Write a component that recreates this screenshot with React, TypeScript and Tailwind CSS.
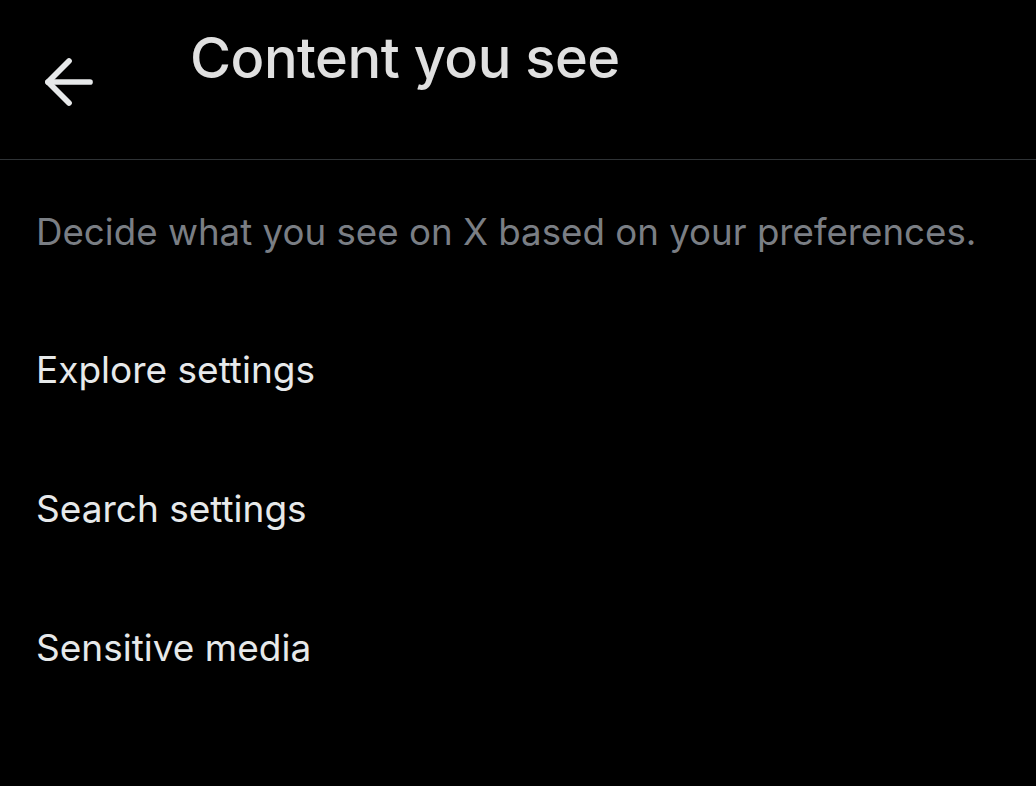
import { ArrowLeft } from "lucide-react";

const items = ["Explore settings", "Search settings", "Sensitive media"];

export default function App() {
  return (
    <div
      className="h-[786px] w-[1036px] overflow-hidden bg-black text-[#e7e9ea]"
      style={{ fontFamily: "Inter, 'Noto Sans', sans-serif" }}
    >
      <header className="flex h-[160px] items-start border-b border-[#2f3336]">
        <div className="flex w-[190px] shrink-0 pt-[46px] pl-[33px]">
          <ArrowLeft className="h-[72px] w-[72px]" strokeWidth={1.9} />
        </div>
        <h1 className="pt-[22px] text-[56px] leading-[72px] font-medium tracking-[-0.5px] text-[#e0e0e0]">
          Content you see
        </h1>
      </header>
      <p className="px-[36px] pt-[50px] text-[36.7px] leading-[44px] text-[#7a7e84]">
        Decide what you see on X based on your preferences.
      </p>
      <ul className="px-[36px] pt-[94px]">
        {items.map((label) => (
          <li key={label} className="h-[139px] text-[37px] leading-[44px]">
            {label}
          </li>
        ))}
      </ul>
    </div>
  );
}
